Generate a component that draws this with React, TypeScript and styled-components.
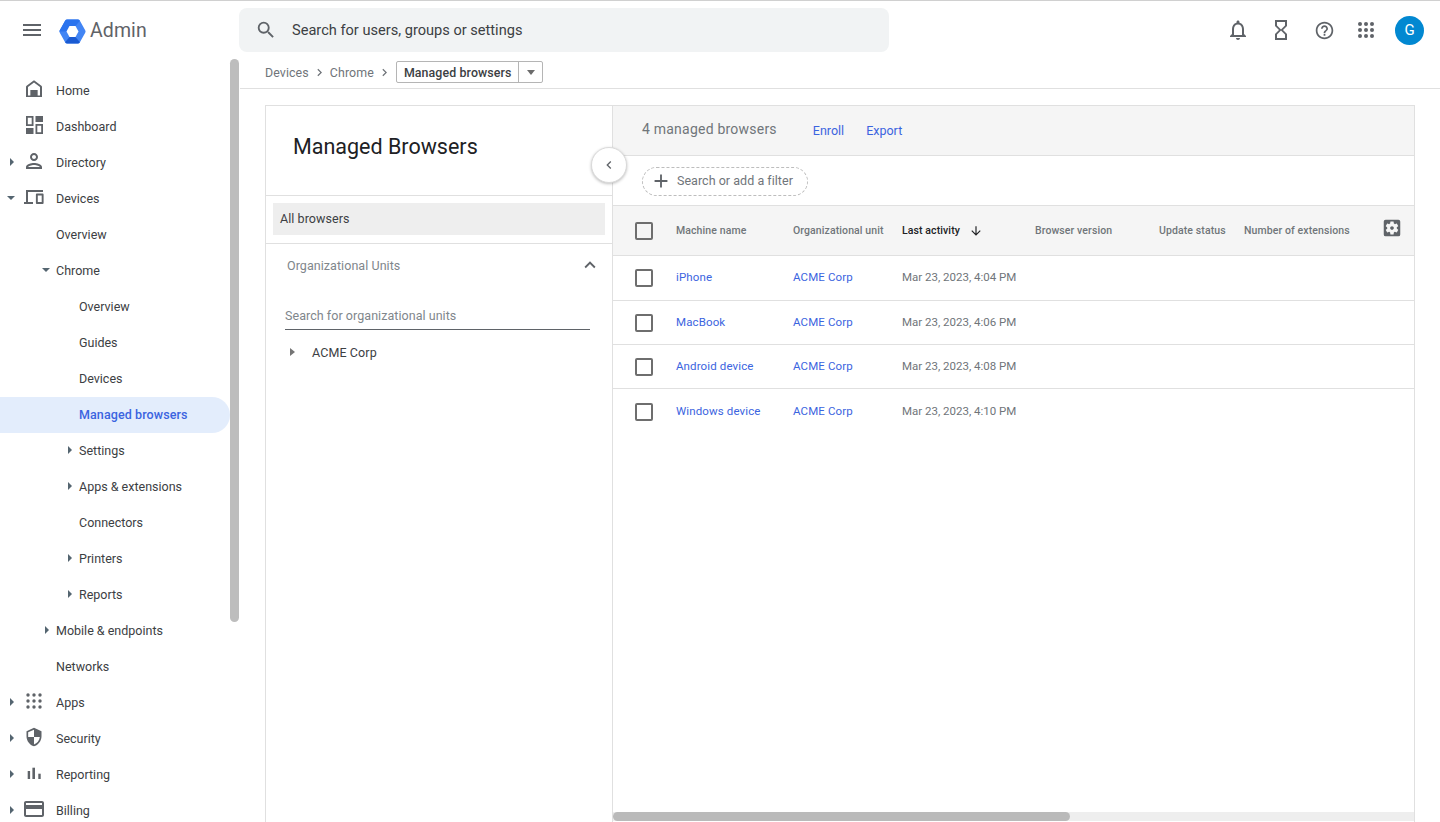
import React from "react";
import styled, { createGlobalStyle } from "styled-components";
import { MdMenu, MdSearch, MdOutlineNotifications, MdHourglassEmpty, MdHelpOutline, MdChevronRight, MdChevronLeft, MdExpandLess, MdAdd, MdArrowDownward, MdSettingsApplications, MdOutlinePerson, MdSecurity, MdOutlineCreditCard } from "react-icons/md";

const Global = createGlobalStyle`
  html, body { margin: 0; padding: 0; height: 100%; overflow: hidden; background: #fff; }
  * { box-sizing: border-box; }
  body { font-family: Roboto, "Liberation Sans", sans-serif; color: #3c4043; }
`;

const Page = styled.div`
  width: 1440px; height: 822px; display: flex; flex-direction: column; overflow: hidden;
  border-top: 1px solid #d0d0d0; background: #fff;
`;
const Header = styled.header`
  height: 58px; flex: none; display: flex; align-items: center; padding: 0 16px 0 0;
`;
const MenuButton = styled.div`
  width: 59px; flex: none; display: flex; justify-content: center; padding-left: 5px; color: #5f6368; font-size: 24px; line-height: 0;
`;
const Brand = styled.div`
  width: 180px; flex: none; display: flex; align-items: center; gap: 4px; color: #5f6368; font-size: 19.5px; letter-spacing: .1px;
  svg { margin-top: 2px; }
`;
const SearchBar = styled.div`
  width: 650px; height: 44px; flex: none; background: #f1f3f4; border-radius: 8px; display: flex; align-items: center;
  padding-left: 16px; gap: 15px; color: #3c4043; font-size: 14.6px;
  svg { color: #5f6368; font-size: 22px; }
`;
const Actions = styled.div`
  margin-left: auto; display: flex; align-items: center; gap: 19px; color: #5f6368; font-size: 24px; line-height: 0;
`;
const HelpSlot = styled.span`
  display: flex; font-size: 21px; margin: 0 .5px 0 1.5px;
`;
const Avatar = styled.div`
  width: 29px; height: 29px; border-radius: 50%; background: #0288d1; color: #fff; font-size: 15px; line-height: 29px; text-align: center; margin-left: -2px;
`;
const Body = styled.div`
  flex: 1; display: flex; min-height: 0;
`;
const Sidebar = styled.nav`
  width: 240px; flex: none; position: relative; padding-top: 14px; overflow: hidden;
`;
const Thumb = styled.div`
  position: absolute; top: 0; left: 230px; width: 9px; height: 563px; background: #bdbdbd; border-radius: 5px;
`;
const Row = styled.div<{ $lead: number; $active?: boolean }>`
  width: 230px; height: 36px; padding-bottom: 2px; display: grid; grid-template-columns: ${p => p.$lead}px 1fr; align-items: center;
  font-size: 12.5px; letter-spacing: ${p => (p.$active ? ".1px" : "0")}; color: ${p => (p.$active ? "#3b64e0" : "#3c4043")};
  font-weight: ${p => (p.$active ? 500 : 400)};
  background: ${p => (p.$active ? "#e3edfc" : "transparent")};
  border-radius: 0 18px 18px 0;
`;
const Lead = styled.div`
  display: flex; justify-content: flex-end; align-items: center; padding-right: 7px; height: 100%;
`;
const IconSlot = styled.span<{ $size?: number }>`
  width: 24px; height: 24px; flex: none; margin: -2px 3px 0 8px; color: #5f6368; line-height: 0; font-size: ${p => p.$size ?? 24}px;
  display: flex; align-items: center; justify-content: center;
  svg { display: block; }
`;
const Caret = styled.span<{ $open?: boolean }>`
  width: 0; height: 0; flex: none;
  ${p => p.$open
    ? "border-left: 4px solid transparent; border-right: 4px solid transparent; border-top: 4px solid #546570; margin-right: -1px;"
    : "border-top: 4px solid transparent; border-bottom: 4px solid transparent; border-left: 4px solid #546570;"}
`;
const Main = styled.main`
  flex: 1; min-width: 0; display: flex; flex-direction: column;
`;
const Crumbs = styled.div`
  height: 30px; flex: none; border-bottom: 1px solid #e0e0e0; display: flex; align-items: center; padding: 0 0 3px 25px;
  font-size: 12.4px; color: #70757a; letter-spacing: .1px;
`;
const CrumbSep = styled.span`
  display: flex; margin: 0 2px 0 3px; font-size: 15px; color: #70757a; width: 16px; justify-content: center;
`;
const CrumbButton = styled.div`
  height: 22px; margin-left: 1px; border: 1px solid #b5b5b5; border-radius: 2px; display: flex; align-items: stretch;
  color: #3c4043; font-weight: 500;
`;
const CrumbLabel = styled.span`
  padding: 0 7px; display: flex; align-items: center; border-right: 1px solid #b5b5b5; font-size: 12.4px; letter-spacing: .1px;
`;
const CrumbDrop = styled.span`
  width: 23px; display: flex; align-items: center; justify-content: center;
  &::after { content: ""; border-left: 4.5px solid transparent; border-right: 4.5px solid transparent; border-top: 5px solid #6b6b6b; }
`;
const PanelWrap = styled.div`
  flex: 1; min-height: 0; padding: 16px 25px 0 25px;
`;
const Panel = styled.div`
  width: 1150px; height: 100%; border: 1px solid #e0e0e0; border-bottom: none; display: flex;
`;
const Left = styled.section`
  width: 347px; flex: none; position: relative; border-right: 1px solid #e0e0e0; display: flex; flex-direction: column;
`;
const TitleBox = styled.div`
  height: 90px; flex: none; border-bottom: 1px solid #e0e0e0; padding: 0 0 8px 27px; display: flex; align-items: center;
  font-size: 21.5px; color: #202124;
`;
const Collapse = styled.div`
  position: absolute; top: 41px; right: -15px; width: 36px; height: 36px; border-radius: 50%; background: #fff;
  border: 1px solid #dadada; box-shadow: 0 1px 3px rgba(0,0,0,.25); display: flex; align-items: center; justify-content: center;
  color: #5f6368; font-size: 16px; z-index: 2;
`;
const AllBox = styled.div`
  height: 48px; flex: none; border-bottom: 1px solid #e0e0e0; padding: 7px;
`;
const AllRow = styled.div`
  height: 32px; width: 100%; background: #eeeeee; display: flex; align-items: center; padding: 0 0 2px 7px; font-size: 12.5px; color: #3c4043; letter-spacing: .06px;
`;
const OrgHead = styled.div`
  height: 44px; flex: none; display: flex; align-items: center; justify-content: space-between; padding: 0 11px 2px 21px;
  font-size: 12.5px; color: #80868b; letter-spacing: .06px;
  svg { color: #5f6368; font-size: 22px; }
`;
const OrgSearch = styled.div`
  margin: 15px 22px 0 19px; height: 27px; border-bottom: 1px solid #5f6368; font-size: 12.5px; color: #80868b; letter-spacing: .05px;
  display: flex; align-items: center; padding-bottom: 2px;
`;
const OrgItem = styled.div`
  margin-top: 11px; padding-left: 24px; display: flex; align-items: center; gap: 17px; font-size: 12.5px; color: #3c4043; height: 22px; letter-spacing: .1px;
`;
const OrgCaret = styled.span`
  width: 0; height: 0; border-top: 4.5px solid transparent; border-bottom: 4.5px solid transparent; border-left: 5px solid #757575;
`;
const Right = styled.section`
  flex: 1; min-width: 0; display: flex; flex-direction: column;
`;
const Toolbar = styled.div`
  height: 50px; flex: none; background: #f5f5f5; border-bottom: 1px solid #e0e0e0; display: flex; align-items: center; padding: 0 0 1px 29px;
`;
const Count = styled.span`
  font-size: 14px; color: #70757a; letter-spacing: .22px; margin-right: 36px; margin-top: -3px;
`;
const ToolLink = styled.a`
  font-size: 12.5px; color: #3b64e0; margin-right: 22px;
`;
const FilterRow = styled.div`
  height: 50px; flex: none; border-bottom: 1px solid #e0e0e0; display: flex; align-items: center; padding: 1px 0 0 29px;
`;
const FilterChip = styled.div`
  width: 166px; height: 29px; border: 1px dashed #bdbdbd; border-radius: 15px; display: flex; align-items: center; padding: 0 0 2px 6.500px; gap: 5.500px;
  font-size: 12.5px; color: #70757a; letter-spacing: .03px;
  svg { font-size: 22px; color: #5f6368; margin-top: 1px; }
`;
const HeadRow = styled.div`
  height: 50px; flex: none; background: #f5f5f5; border-bottom: 1px solid #e0e0e0; display: grid; align-items: center;
  grid-template-columns: 63px 117px 109px 133px 124px 85px 1fr;
  font-size: 10.5px; font-weight: 500; color: #70757a; letter-spacing: .1px;
`;
const HeadCell = styled.div<{ $strong?: boolean }>`
  display: flex; align-items: center; gap: 9px; white-space: nowrap;
  color: ${p => (p.$strong ? "#202124" : "#70757a")};
  svg { font-size: 14px; color: #202124; }
`;
const HeadLast = styled.div`
  display: flex; align-items: center; justify-content: space-between; padding-right: 11px; white-space: nowrap;
  svg { font-size: 22px; color: #5f6368; margin-top: -5px; }
`;
const BodyRow = styled.div<{ $h: number }>`
  height: ${p => p.$h}px; flex: none; border-bottom: ${p => (p.$h === 46 ? "none" : "1px solid #e0e0e0")}; display: grid; align-items: center;
  grid-template-columns: 63px 117px 109px 1fr;
  font-size: 11.5px; color: #70757a;
`;
const Check = styled.span`
  width: 18px; height: 18px; margin-left: 22px; border: 2px solid #6e6e6e; border-radius: 2px; display: block;
`;
const Linked = styled.a`
  color: #3b64e0; font-size: 11.5px; letter-spacing: .12px; margin-top: -2px;
`;
const TimeText = styled.span`
  margin-top: -2px;
`;
const Fill = styled.div`flex: 1;`;
const HScroll = styled.div`
  height: 9px; flex: none; background: #eeeeee; margin-bottom: 1px;
`;
const HThumb = styled.div`
  width: 457px; height: 100%; background: #bababa; border-radius: 5px;
`;

const S = ({ children }: { children: React.ReactNode }) => (
  <svg width="24" height="24" viewBox="0 0 24 24" fill="#5f6368">{children}</svg>
);
const HomeIcon = () => <S><path d="M12 3.2 4.600 8.800A1.600 1.600 0 0 0 4 10v10h16V10a1.600 1.600 0 0 0-.6-1.200L12 3.200zM18 18.400h-2.600V13H8.600v5.400H6V10l6-4.600 6 4.600v8.400z" /><rect x="8.600" y="13" width="6.800" height="6" /></S>;
const DashIcon = () => <S><path d="M4 3h7.500v10H4zM5.800 4.800v6.400h3.900V4.800z" fillRule="evenodd" /><rect x="13.500" y="3" width="7.500" height="6" /><rect x="4" y="15" width="7.500" height="6" /><path d="M13.500 11H21v10h-7.500zM15.300 12.800v6.400h3.900v-6.400z" fillRule="evenodd" /></S>;
const DevicesIcon = () => <S><path d="M4 5h17v2H6v10h5v2H2v-2h2z" /><path d="M14.800 8.500h5.900a.9.9 0 0 1 .9.9v8.700a.9.9 0 0 1-.9.9h-5.900a.9.9 0 0 1-.9-.9V9.400a.9.9 0 0 1 .9-.9zm1 2v6.500h3.900v-6.500z" fillRule="evenodd" /></S>;
const dots = (cx: number[], cy: number[], r: number) =>
  cy.flatMap(y => cx.map(x => <circle key={`${x}-${y}`} cx={x} cy={y} r={r} />));
const AppsIcon = () => <S>{dots([6, 12, 18], [6, 12, 18], 1.7)}</S>;
const TopApps = () => <S>{dots([6, 12, 18], [6, 12, 18], 2)}</S>;
const BarsIcon = () => <S><rect x="5.700" y="10" width="2.400" height="8" /><rect x="10.400" y="6.700" width="2.600" height="11.300" /><rect x="16.300" y="12.700" width="2.400" height="5.300" /></S>;

const Logo = () => (
  <svg width="27" height="27" viewBox="0 0 27 27">
    <path d="M8.200 1.500h10.600a2.500 2.500 0 0 1 2.100 1.200l5.300 9.500a2.500 2.500 0 0 1 0 2.600l-5.300 9.500a2.500 2.500 0 0 1-2.100 1.200H8.200a2.500 2.500 0 0 1-2.100-1.200L.800 14.800a2.500 2.500 0 0 1 0-2.600l5.300-9.500a2.500 2.500 0 0 1 2.100-1.200z" fill="#4285f4" />
    <path d="M8.200 1.500h10.600a2.500 2.500 0 0 1 2.100 1.200L16.500 8h-6l-3 5.500H.3a2.500 2.500 0 0 1 .5-1.300l5.300-9.500a2.500 2.500 0 0 1 2.100-1.200z" fill="#2a73ee" />
    <path d="M6.100 24.300 10.500 19h6l4.400 5.300a2.500 2.500 0 0 1-2.100 1.200H8.200a2.500 2.500 0 0 1-2.100-1.200z" fill="#1a5ad2" />
    <path d="M10.500 8h6l3 5.500-3 5.500h-6l-3-5.500z" fill="#fff" />
  </svg>
);

type NavItem = { label: string; lead: number; icon?: React.ReactNode; size?: number; caret?: "open" | "closed"; active?: boolean };
const nav: NavItem[] = [
  { label: "Home", lead: 56, icon: <HomeIcon /> },
  { label: "Dashboard", lead: 56, icon: <DashIcon /> },
  { label: "Directory", lead: 56, icon: <MdOutlinePerson />, caret: "closed" },
  { label: "Devices", lead: 56, icon: <DevicesIcon />, caret: "open" },
  { label: "Overview", lead: 56 },
  { label: "Chrome", lead: 56, caret: "open" },
  { label: "Overview", lead: 79 },
  { label: "Guides", lead: 79 },
  { label: "Devices", lead: 79 },
  { label: "Managed browsers", lead: 79, active: true },
  { label: "Settings", lead: 79, caret: "closed" },
  { label: "Apps & extensions", lead: 79, caret: "closed" },
  { label: "Connectors", lead: 79 },
  { label: "Printers", lead: 79, caret: "closed" },
  { label: "Reports", lead: 79, caret: "closed" },
  { label: "Mobile & endpoints", lead: 56, caret: "closed" },
  { label: "Networks", lead: 56 },
  { label: "Apps", lead: 56, icon: <AppsIcon />, caret: "closed" },
  { label: "Security", lead: 56, icon: <MdSecurity />, size: 20, caret: "closed" },
  { label: "Reporting", lead: 56, icon: <BarsIcon />, caret: "closed" },
  { label: "Billing", lead: 56, icon: <MdOutlineCreditCard />, caret: "closed" },
];

const rows = [
  { name: "iPhone", time: "Mar 23, 2023, 4:04 PM", h: 45 },
  { name: "MacBook", time: "Mar 23, 2023, 4:06 PM", h: 44 },
  { name: "Android device", time: "Mar 23, 2023, 4:08 PM", h: 44 },
  { name: "Windows device", time: "Mar 23, 2023, 4:10 PM", h: 46 },
];

export default function App() {
  return (
    <Page>
      <Global />
      <Header>
        <MenuButton><MdMenu /></MenuButton>
        <Brand><Logo /><span>Admin</span></Brand>
        <SearchBar><MdSearch /><span>Search for users, groups or settings</span></SearchBar>
        <Actions>
          <MdOutlineNotifications />
          <MdHourglassEmpty />
          <HelpSlot><MdHelpOutline /></HelpSlot>
          <TopApps />
          <Avatar>G</Avatar>
        </Actions>
      </Header>
      <Body>
        <Sidebar>
          <Thumb />
          {nav.map((n, i) => (
            <Row key={i} $lead={n.lead} $active={n.active}>
              <Lead>
                {n.caret && <Caret $open={n.caret === "open"} />}
                {n.icon && <IconSlot $size={n.size}>{n.icon}</IconSlot>}
              </Lead>
              <span>{n.label}</span>
            </Row>
          ))}
        </Sidebar>
        <Main>
          <Crumbs>
            <span>Devices</span>
            <CrumbSep><MdChevronRight /></CrumbSep>
            <span>Chrome</span>
            <CrumbSep><MdChevronRight /></CrumbSep>
            <CrumbButton><CrumbLabel>Managed browsers</CrumbLabel><CrumbDrop /></CrumbButton>
          </Crumbs>
          <PanelWrap>
            <Panel>
              <Left>
                <TitleBox>Managed Browsers</TitleBox>
                <Collapse><MdChevronLeft /></Collapse>
                <AllBox><AllRow>All browsers</AllRow></AllBox>
                <OrgHead><span>Organizational Units</span><MdExpandLess /></OrgHead>
                <OrgSearch>Search for organizational units</OrgSearch>
                <OrgItem><OrgCaret /><span>ACME Corp</span></OrgItem>
              </Left>
              <Right>
                <Toolbar>
                  <Count>4 managed browsers</Count>
                  <ToolLink>Enroll</ToolLink>
                  <ToolLink>Export</ToolLink>
                </Toolbar>
                <FilterRow>
                  <FilterChip><MdAdd /><span>Search or add a filter</span></FilterChip>
                </FilterRow>
                <HeadRow>
                  <Check />
                  <HeadCell>Machine name</HeadCell>
                  <HeadCell>Organizational unit</HeadCell>
                  <HeadCell $strong>Last activity <MdArrowDownward /></HeadCell>
                  <HeadCell>Browser version</HeadCell>
                  <HeadCell>Update status</HeadCell>
                  <HeadLast><span>Number of extensions</span><MdSettingsApplications /></HeadLast>
                </HeadRow>
                {rows.map(r => (
                  <BodyRow key={r.name} $h={r.h}>
                    <Check />
                    <Linked>{r.name}</Linked>
                    <Linked>ACME Corp</Linked>
                    <TimeText>{r.time}</TimeText>
                  </BodyRow>
                ))}
                <Fill />
                <HScroll><HThumb /></HScroll>
              </Right>
            </Panel>
          </PanelWrap>
        </Main>
      </Body>
    </Page>
  );
}
